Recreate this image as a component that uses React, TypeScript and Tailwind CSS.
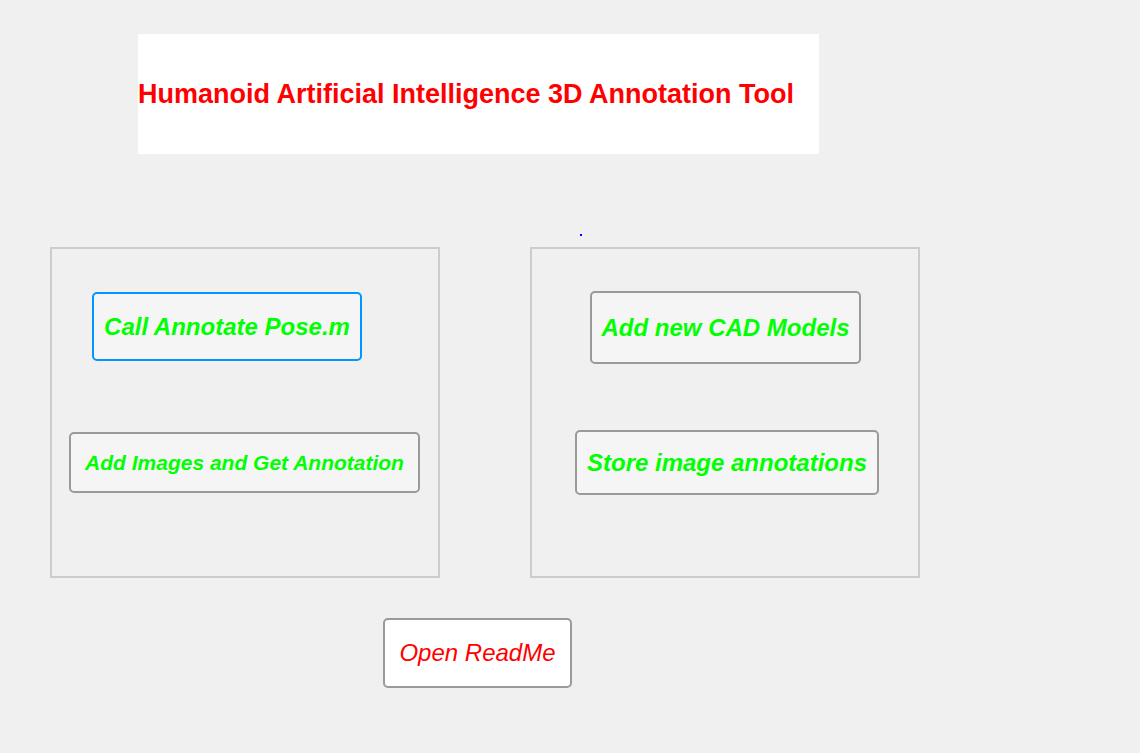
export default function App() {
    return (
        <div className="w-[1140px] h-[753px] bg-[#f0f0f0] overflow-hidden font-['Liberation_Sans',Arial,sans-serif]">
            {/* Title panel */}
            <div className="ml-[138px] mt-[34px] w-[681px] h-[120px] bg-white flex items-center">
                <h1 className="text-[27px] font-bold text-[#ff0000] leading-none whitespace-nowrap">
                    Humanoid Artificial Intelligence 3D Annotation Tool
                </h1>
            </div>

            {/* stray marker */}
            <div className="ml-[580px] mt-[80px] w-[2px] h-[2px] bg-[#0000ff]" />

            <div className="flex ml-[50px] mt-[11px] gap-[90px]">
                {/* Left panel */}
                <div className="w-[390px] h-[331px] border-2 border-[#cccccc] flex flex-col">
                    <button className="ml-[40px] mt-[43px] w-[270px] h-[69px] rounded-[5px] border-2 border-[#0096ff] bg-[#f5f5f5] text-[24px] font-bold italic text-[#00ff00] whitespace-nowrap">
                        Call Annotate Pose.m
                    </button>
                    <button className="ml-[17px] mt-[71px] w-[351px] h-[61px] rounded-[5px] border-2 border-[#9a9a9a] bg-[#f5f5f5] text-[21px] font-bold italic text-[#00ff00] whitespace-nowrap">
                        Add Images and Get Annotation
                    </button>
                </div>

                {/* Right panel */}
                <div className="w-[390px] h-[331px] border-2 border-[#cccccc] flex flex-col">
                    <button className="ml-[58px] mt-[42px] w-[271px] h-[73px] rounded-[5px] border-2 border-[#9a9a9a] bg-[#f5f5f5] text-[24px] font-bold italic text-[#00ff00] whitespace-nowrap">
                        Add new CAD Models
                    </button>
                    <button className="ml-[43px] mt-[66px] w-[304px] h-[65px] rounded-[5px] border-2 border-[#9a9a9a] bg-[#f5f5f5] text-[24px] font-bold italic text-[#00ff00] whitespace-nowrap">
                        Store image annotations
                    </button>
                </div>
            </div>

            <button className="ml-[383px] mt-[40px] w-[189px] h-[70px] rounded-[5px] border-2 border-[#9a9a9a] bg-white text-[24px] italic text-[#ff0000] whitespace-nowrap">
                Open ReadMe
            </button>
        </div>
    );
}
